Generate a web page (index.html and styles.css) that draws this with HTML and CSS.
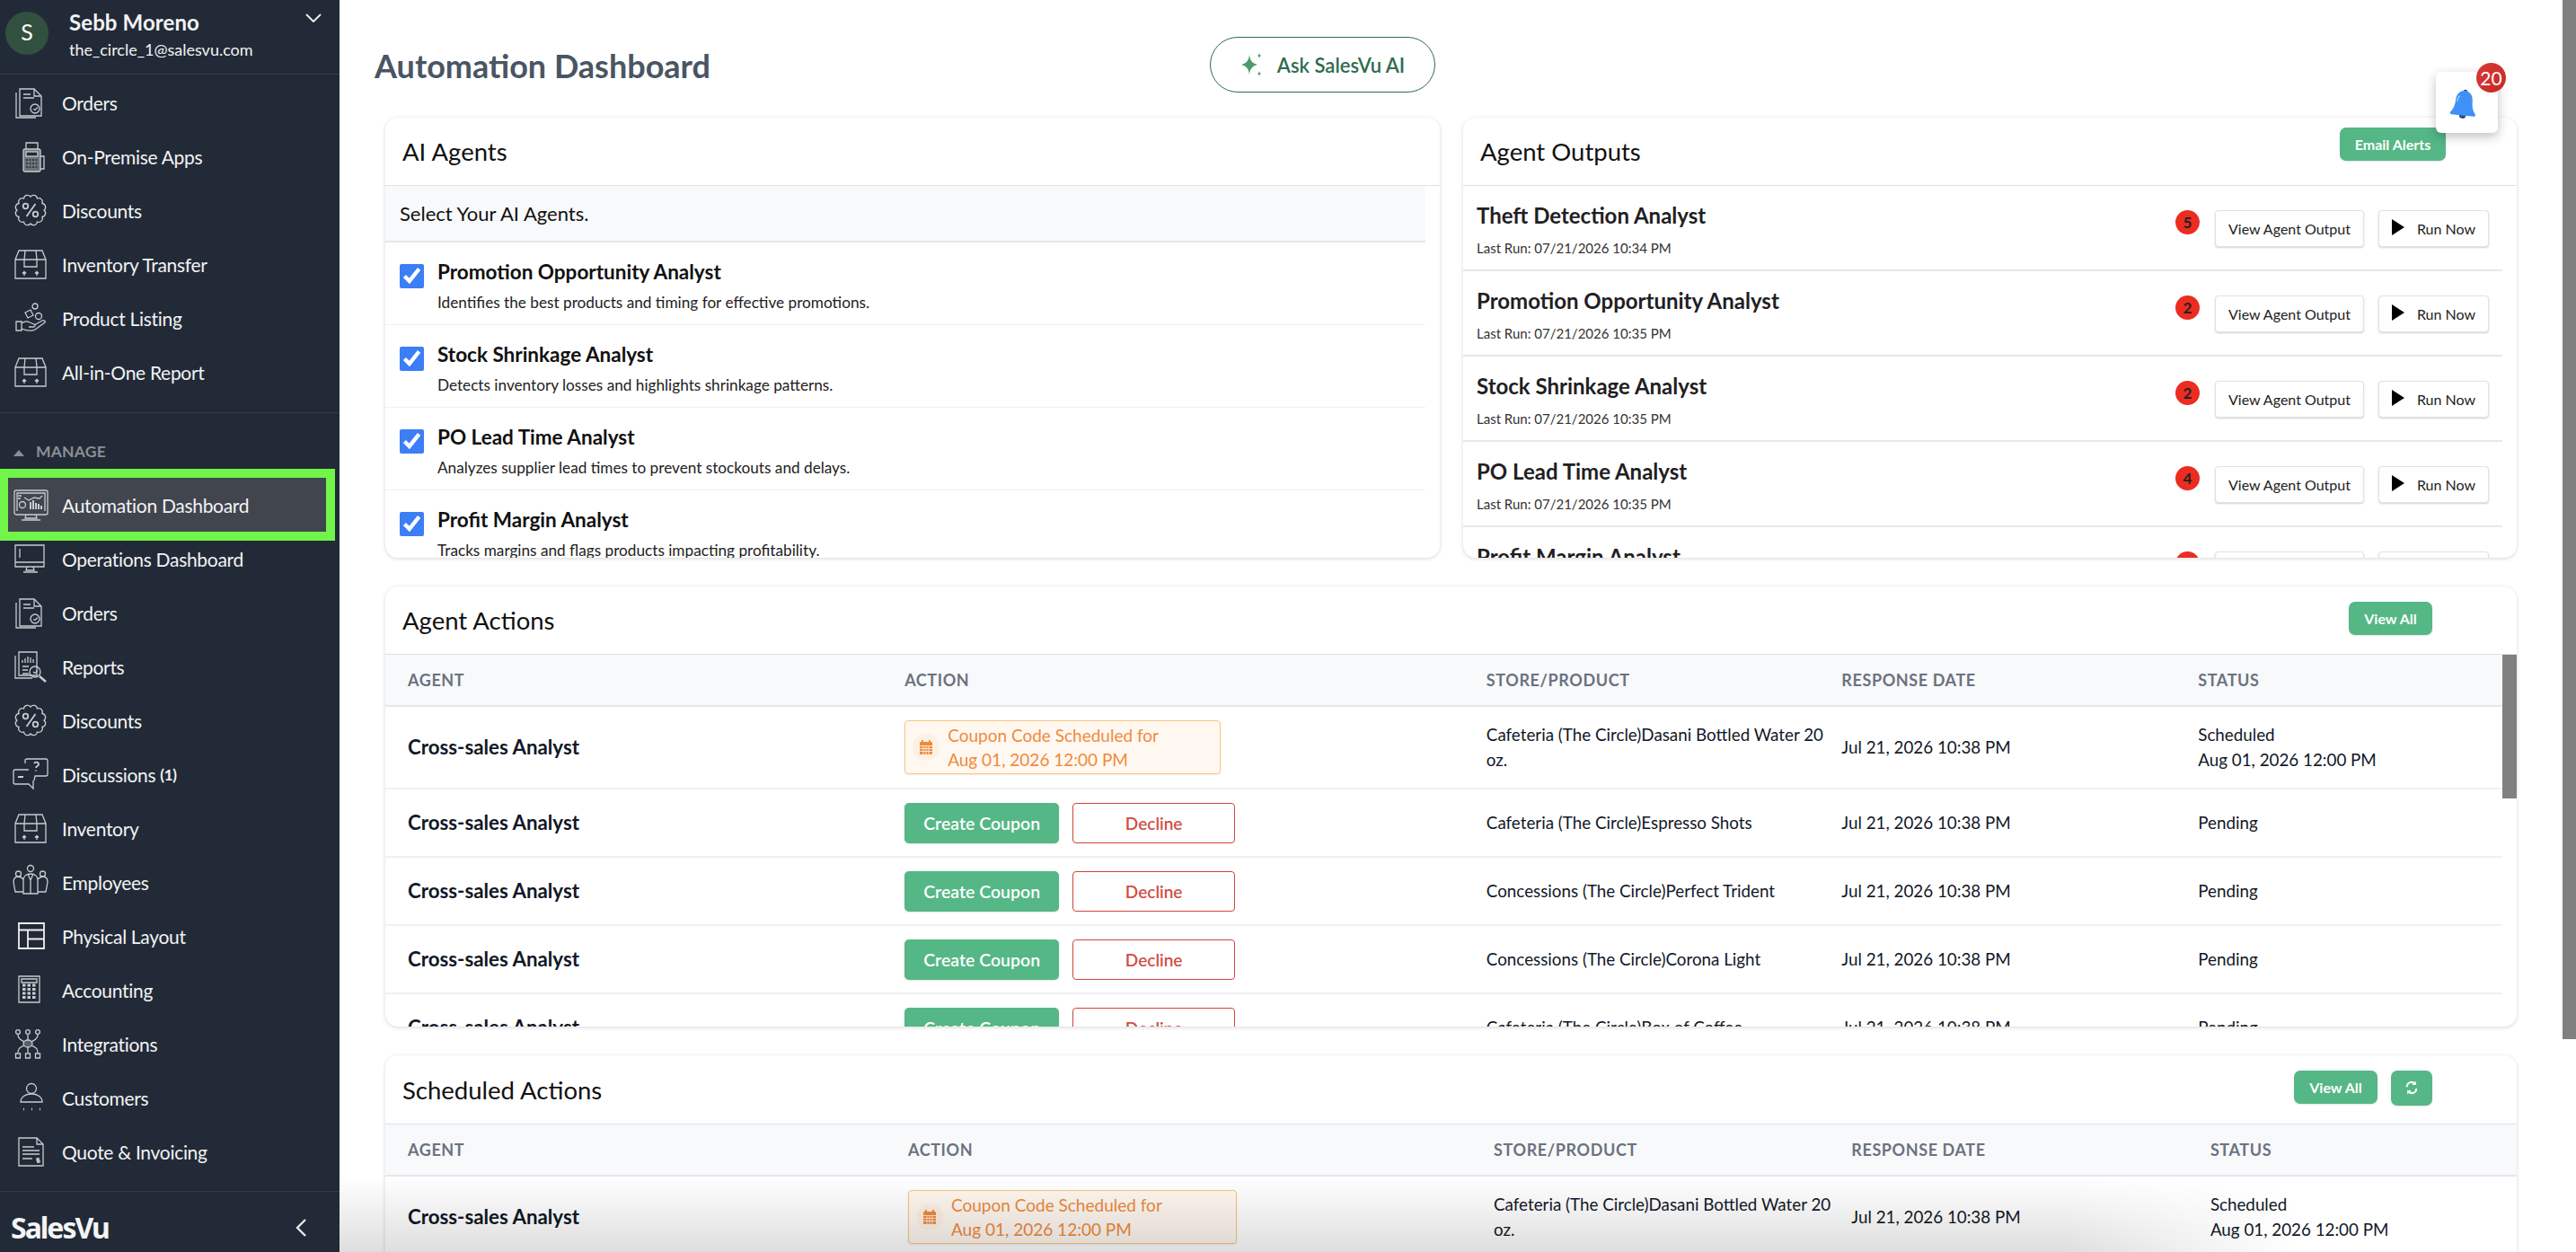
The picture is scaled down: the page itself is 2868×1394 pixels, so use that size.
FILE: index.html
```html
<!DOCTYPE html>
<html lang="en">
<head>
    <meta charset="UTF-8">
    <meta name="viewport" content="width=device-width, initial-scale=1.0">
    <title>Automation Dashboard</title>
    <link rel="stylesheet" href="styles.css">
</head>
<body>

<!-- icon sheet -->
<svg class="icon-sheet" xmlns="http://www.w3.org/2000/svg">
    <symbol id="i-orders" viewBox="0 0 40 40"><path d="M8 5h16l8 8v22H8z"/><path d="M24 5v8h8M4 9v28h22M12 11h8M12 15h12"/><circle cx="25" cy="27" r="5"/><path d="M23 27.5l2 1 3-3"/></symbol>
    <symbol id="i-pos" viewBox="0 0 40 40"><rect x="12" y="12" width="19" height="25" rx="2" fill="#6f747b"/><path d="M15 12V5h13v7M31 20h4v14h-4"/><rect x="15" y="15" width="13" height="5" fill="#222a37"/><path d="M15 24h13M15 28h13M15 32h13" stroke="#222a37" stroke-dasharray="2 1.5"/></symbol>
    <symbol id="i-discount" viewBox="0 0 40 40"><path d="M20 5A4.2 4.2 0 0 1 27.5 7 4.2 4.2 0 0 1 33 12.5 4.2 4.2 0 0 1 35 20 4.2 4.2 0 0 1 33 27.5 4.2 4.2 0 0 1 27.5 33 4.2 4.2 0 0 1 20 35 4.2 4.2 0 0 1 12.5 33 4.2 4.2 0 0 1 7 27.5 4.2 4.2 0 0 1 5 20 4.2 4.2 0 0 1 7 12.5 4.2 4.2 0 0 1 12.5 7 4.2 4.2 0 0 1 20 5z"/><g stroke-width="1.8"><path d="M25.5 13l-10 14"/><circle cx="14.5" cy="15.5" r="2.8"/><circle cx="25.5" cy="24.5" r="2.8"/></g></symbol>
    <symbol id="i-box" viewBox="0 0 40 40"><path d="M3 15h34v21H3zM3 15l4-10h26l4 10M14 5l-1 10M26 5l1 10"/><path d="M13 15v8h14v-8M13 33v-4M11 30.500l2-2 2 2M27 33v-4M25 30.500l2-2 2 2"/></symbol>
    <symbol id="i-product" viewBox="0 0 40 40"><circle cx="25" cy="7" r="3"/><circle cx="29" cy="18" r="3.500"/><path d="M14 14l6-3 3 6-6 3zM4 24h6v10H4zM10 26c3-2 6-3 9-1l5 2c2 1 1 3-1 3h-5M24 28l9-5c2-1 4 1 3 2l-11 8c-4 2-10 1-15-1"/></symbol>
    <symbol id="i-auto" viewBox="0 0 40 40"><rect x="2" y="4" width="37" height="27" rx="2"/><path d="M5 27V7h31v20M15 31l-1 4h13l-1-4M10 37h21M13 12l5 3 6-3 6 1 3-3M6 10h4M6 13h3"/><circle cx="11" cy="20" r="3.500"/><path d="M20 25v-8M23 25v-10M26 25v-7M29 25v-6M32 25v-4" stroke-width="2"/></symbol>
    <symbol id="i-monitor" viewBox="0 0 40 40"><path d="M3 5h32v24H3zM3 24h32M8 9v10M16 29l-1 4h9l-1-4M12 35h16"/></symbol>
    <symbol id="i-report" viewBox="0 0 40 40"><path d="M7 4h20v26H7zM3 8v25h19M11 16v-3M14 16v-5M17 16V9M20 16v-6M23 16v-4M11 20h7M11 24h6M11 28h7"/><circle cx="25" cy="26" r="6"/><path d="M23 26l2 1.500 3-3"/><path d="M30 31l7 6" stroke-width="2.600"/></symbol>
    <symbol id="i-chat" viewBox="0 0 40 40"><path d="M14 8V5a2 2 0 0 1 2-2h21a2 2 0 0 1 2 2v15a2 2 0 0 1-2 2H25l-1 5M18 15H3a2 2 0 0 0-2 2v12a2 2 0 0 0 2 2h15l5 5V27"/><path d="M24 8c1-2 5-2 5 1 0 2-3 2-3 4M26 15.500v1M6 23h6" stroke-width="1.800"/></symbol>
    <symbol id="i-people" viewBox="0 0 40 40"><circle cx="20" cy="5" r="3.500"/><circle cx="6.500" cy="11" r="3"/><circle cx="33.500" cy="11" r="3"/><path d="M12 33V18c0-4 3-7 8-7s8 3 8 7v15zM17 11l3 7 3-7M20 18v15M12 17c-2-2-3-3-5.500-3C3 14 1 16 1 20l2 11h9M28 17c2-2 3-3 5.500-3 3.500 0 5.500 2 5.500 6l-2 11h-9"/></symbol>
    <symbol id="i-layout" viewBox="0 0 40 40"><path d="M7 6h28v28H7zM7 13.500h28M17 13.500V34M17 23.500h18" stroke="#f0f0f0" stroke-width="1.800"/></symbol>
    <symbol id="i-calc" viewBox="0 0 40 40"><path d="M7 5h23v29H7zM10 8h17v4H10z"/><path d="M11 15h15M11 19.500h15M11 24h15M11 28.500h15" stroke-width="3" stroke-dasharray="3.500 2"/></symbol>
    <symbol id="i-integrations" viewBox="0 0 40 40"><circle cx="6" cy="7" r="2.400"/><circle cx="17" cy="7" r="2.400"/><circle cx="28" cy="7" r="2.400"/><ellipse cx="17" cy="20" rx="5" ry="4" fill="#5c6168"/><path d="M6 10c0 6 5 6 7 8M17 10v6M28 10c0 6-5 6-7 8M13 22c-3 2-7 2-7 8M17 24v6M21 22c3 2 7 2 7 8M3.500 31h5v5h-5zM14.500 31h5v5h-5zM25.500 31h5v5h-5z"/></symbol>
    <symbol id="i-customers" viewBox="0 0 40 40"><circle cx="21" cy="10" r="5.500"/><path d="M9 25c0-6 6-9 12-9s12 3 12 9zM9 25h24"/><path d="M12 33h1M21 33h1M30 33h1" stroke-width="2.500"/></symbol>
    <symbol id="i-quote" viewBox="0 0 40 40"><path d="M7 5h20l7 7v24H7zM27 5v7h7M11 15h13M11 19h19M11 23h19M11 28h11M28 27v6M30 28h-3v2h3v2h-3"/></symbol>
    <symbol id="i-calendar" viewBox="0 0 16 18"><path d="M2 3h12a1 1 0 0 1 1 1v12a1 1 0 0 1-1 1H2a1 1 0 0 1-1-1V4a1 1 0 0 1 1-1z" fill="#f08a3c"/><path d="M4 1v3M12 1v3" stroke="#f08a3c" stroke-width="2"/><path d="M1 7.500h14M1 10.500h14M1 13.500h14M5 7v10M8 7v10M11 7v10" stroke="#fff8f1" stroke-width=".8"/></symbol>
    <symbol id="i-play" viewBox="0 0 14 18"><path d="M0 0l14 9L0 18z"/></symbol>
</svg>

<div class="layout">

    <aside class="sidebar">
        <div class="user-box">
            <div class="avatar">S</div>
            <div class="user-text">
                <div class="user-name">Sebb Moreno</div>
                <div class="user-mail">the_circle_1@salesvu.com</div>
            </div>
            <svg class="user-chevron" viewBox="0 0 18 10"><path d="M1 1l8 8 8-8"/></svg>
        </div>

        <nav class="nav-group">
            <a class="nav-item"><svg class="nav-icon"><use href="#i-orders"/></svg>Orders</a>
            <a class="nav-item"><svg class="nav-icon"><use href="#i-pos"/></svg>On-Premise Apps</a>
            <a class="nav-item"><svg class="nav-icon"><use href="#i-discount"/></svg>Discounts</a>
            <a class="nav-item"><svg class="nav-icon"><use href="#i-box"/></svg>Inventory Transfer</a>
            <a class="nav-item"><svg class="nav-icon"><use href="#i-product"/></svg>Product Listing</a>
            <a class="nav-item"><svg class="nav-icon"><use href="#i-box"/></svg>All-in-One Report</a>
        </nav>

        <div class="nav-title">
            <svg class="nav-caret" viewBox="0 0 12 7"><path d="M6 0l6 7H0z"/></svg>
            MANAGE
        </div>

        <nav class="nav-group nav-manage">
            <a class="nav-item nav-active"><svg class="nav-icon"><use href="#i-auto"/></svg>Automation Dashboard</a>
            <a class="nav-item"><svg class="nav-icon"><use href="#i-monitor"/></svg>Operations Dashboard</a>
            <a class="nav-item"><svg class="nav-icon"><use href="#i-orders"/></svg>Orders</a>
            <a class="nav-item"><svg class="nav-icon"><use href="#i-report"/></svg>Reports</a>
            <a class="nav-item"><svg class="nav-icon"><use href="#i-discount"/></svg>Discounts</a>
            <a class="nav-item"><svg class="nav-icon"><use href="#i-chat"/></svg>Discussions <b class="nav-count">(1)</b></a>
            <a class="nav-item"><svg class="nav-icon"><use href="#i-box"/></svg>Inventory</a>
            <a class="nav-item"><svg class="nav-icon"><use href="#i-people"/></svg>Employees</a>
            <a class="nav-item"><svg class="nav-icon"><use href="#i-layout"/></svg>Physical Layout</a>
            <a class="nav-item"><svg class="nav-icon"><use href="#i-calc"/></svg>Accounting</a>
            <a class="nav-item"><svg class="nav-icon"><use href="#i-integrations"/></svg>Integrations</a>
            <a class="nav-item"><svg class="nav-icon"><use href="#i-customers"/></svg>Customers</a>
            <a class="nav-item"><svg class="nav-icon"><use href="#i-quote"/></svg>Quote &amp; Invoicing</a>
        </nav>

        <div class="side-foot">
            <span class="brand">SalesVu</span>
            <svg class="foot-chevron" viewBox="0 0 12 20"><path d="M11 1L2 10l9 9"/></svg>
        </div>
    </aside>

    <main class="main">
        <div class="page-head">
            <h1>Automation Dashboard</h1>
            <button class="ask-btn">
                <svg class="ask-icon" viewBox="0 0 24 30"><path d="M10 4c1 7 3 9 9 11-6 2-8 4-9 11-1-7-3-9-9-11 6-2 8-4 9-11zM21 2c.4 2 .8 2.500 2 3-1.200.5-1.600 1-2 3-.4-2-.8-2.500-2-3 1.200-.5 1.600-1 2-3zM21 22c.4 2 .8 2.500 2 3-1.200.5-1.600 1-2 3-.4-2-.8-2.500-2-3 1.200-.5 1.600-1 2-3z"/></svg>
                Ask SalesVu AI
            </button>
        </div>

        <div class="top-row">
            <section class="card card-top">
                <div class="card-head"><h2>AI Agents</h2></div>
                <div class="agents-list">
                    <div class="agents-hint">Select Your AI Agents.</div>
                    <label class="agent-row">
                        <input type="checkbox" checked>
                        <span><strong>Promotion Opportunity Analyst</strong><small>Identifies the best products and timing for effective promotions.</small></span>
                    </label>
                    <label class="agent-row">
                        <input type="checkbox" checked>
                        <span><strong>Stock Shrinkage Analyst</strong><small>Detects inventory losses and highlights shrinkage patterns.</small></span>
                    </label>
                    <label class="agent-row">
                        <input type="checkbox" checked>
                        <span><strong>PO Lead Time Analyst</strong><small>Analyzes supplier lead times to prevent stockouts and delays.</small></span>
                    </label>
                    <label class="agent-row">
                        <input type="checkbox" checked>
                        <span><strong>Profit Margin Analyst</strong><small>Tracks margins and flags products impacting profitability.</small></span>
                    </label>
                </div>
            </section>

            <section class="card card-top">
                <div class="card-head">
                    <h2>Agent Outputs</h2>
                    <button class="btn-green btn-alerts">Email Alerts</button>
                </div>
                <div class="outputs-list">
                    <div class="output-row">
                        <div class="output-info"><strong>Theft Detection Analyst</strong><small>Last Run: 07/21/2026 10:34 PM</small></div>
                        <span class="count-dot">5</span>
                        <button class="btn-plain btn-view">View Agent Output</button>
                        <button class="btn-plain btn-run"><svg class="play-icon"><use href="#i-play"/></svg>Run Now</button>
                    </div>
                    <div class="output-row">
                        <div class="output-info"><strong>Promotion Opportunity Analyst</strong><small>Last Run: 07/21/2026 10:35 PM</small></div>
                        <span class="count-dot">2</span>
                        <button class="btn-plain btn-view">View Agent Output</button>
                        <button class="btn-plain btn-run"><svg class="play-icon"><use href="#i-play"/></svg>Run Now</button>
                    </div>
                    <div class="output-row">
                        <div class="output-info"><strong>Stock Shrinkage Analyst</strong><small>Last Run: 07/21/2026 10:35 PM</small></div>
                        <span class="count-dot">2</span>
                        <button class="btn-plain btn-view">View Agent Output</button>
                        <button class="btn-plain btn-run"><svg class="play-icon"><use href="#i-play"/></svg>Run Now</button>
                    </div>
                    <div class="output-row">
                        <div class="output-info"><strong>PO Lead Time Analyst</strong><small>Last Run: 07/21/2026 10:35 PM</small></div>
                        <span class="count-dot">4</span>
                        <button class="btn-plain btn-view">View Agent Output</button>
                        <button class="btn-plain btn-run"><svg class="play-icon"><use href="#i-play"/></svg>Run Now</button>
                    </div>
                    <div class="output-row">
                        <div class="output-info"><strong>Profit Margin Analyst</strong><small>Last Run: 07/21/2026 10:35 PM</small></div>
                        <span class="count-dot">3</span>
                        <button class="btn-plain btn-view">View Agent Output</button>
                        <button class="btn-plain btn-run"><svg class="play-icon"><use href="#i-play"/></svg>Run Now</button>
                    </div>
                </div>
            </section>
        </div>

        <section class="card card-actions">
            <div class="card-head card-head-actions">
                <h2>Agent Actions</h2>
                <div class="head-btns"><button class="btn-green btn-small">View All</button></div>
            </div>
            <div class="table-wrap table-scroll">
                <table class="data-table">
                    <colgroup><col class="col-agent"><col class="col-action"><col class="col-store"><col class="col-date"><col class="col-status"></colgroup>
                    <thead><tr><th>AGENT</th><th>ACTION</th><th>STORE/PRODUCT</th><th>RESPONSE DATE</th><th>STATUS</th></tr></thead>
                    <tbody>
                        <tr class="row-tall">
                            <td class="td-agent">Cross-sales Analyst</td>
                            <td><div class="sched-tag sched-tag-a"><span class="sched-dot"><svg class="cal-icon"><use href="#i-calendar"/></svg></span><span>Coupon Code Scheduled for<br>Aug 01, 2026 12:00 PM</span></div></td>
                            <td>Cafeteria (The Circle)Dasani Bottled Water 20 oz.</td>
                            <td>Jul 21, 2026 10:38 PM</td>
                            <td>Scheduled<br>Aug 01, 2026 12:00 PM</td>
                        </tr>
                        <tr>
                            <td class="td-agent">Cross-sales Analyst</td>
                            <td><div class="act-btns"><button class="btn-green btn-coupon">Create Coupon</button><button class="btn-decline">Decline</button></div></td>
                            <td>Cafeteria (The Circle)Espresso Shots</td>
                            <td>Jul 21, 2026 10:38 PM</td>
                            <td>Pending</td>
                        </tr>
                        <tr>
                            <td class="td-agent">Cross-sales Analyst</td>
                            <td><div class="act-btns"><button class="btn-green btn-coupon">Create Coupon</button><button class="btn-decline">Decline</button></div></td>
                            <td>Concessions (The Circle)Perfect Trident</td>
                            <td>Jul 21, 2026 10:38 PM</td>
                            <td>Pending</td>
                        </tr>
                        <tr>
                            <td class="td-agent">Cross-sales Analyst</td>
                            <td><div class="act-btns"><button class="btn-green btn-coupon">Create Coupon</button><button class="btn-decline">Decline</button></div></td>
                            <td>Concessions (The Circle)Corona Light</td>
                            <td>Jul 21, 2026 10:38 PM</td>
                            <td>Pending</td>
                        </tr>
                        <tr>
                            <td class="td-agent">Cross-sales Analyst</td>
                            <td><div class="act-btns"><button class="btn-green btn-coupon">Create Coupon</button><button class="btn-decline">Decline</button></div></td>
                            <td>Cafeteria (The Circle)Box of Coffee</td>
                            <td>Jul 21, 2026 10:38 PM</td>
                            <td>Pending</td>
                        </tr>
                    </tbody>
                </table>
            </div>
            <div class="table-thumb"></div>
        </section>

        <section class="card card-sched">
            <div class="card-head card-head-actions card-head-sched">
                <h2>Scheduled Actions</h2>
                <div class="head-btns">
                    <button class="btn-green btn-small">View All</button>
                    <button class="btn-green btn-refresh">
                        <svg class="refresh-icon" viewBox="0 0 16 20"><path d="M2 9c0-4 3-6 6-6 2 0 3.500 1 4.500 2.500M14 11c0 4-3 6-6 6-2 0-3.500-1-4.500-2.500"/><path d="M13.500 1.500v5h-5zM2.500 18.500v-5h5z" class="refresh-tip"/></svg>
                    </button>
                </div>
            </div>
            <div class="table-wrap">
                <table class="data-table">
                    <colgroup><col class="col-agent"><col class="col-action"><col class="col-store"><col class="col-date"><col class="col-status"></colgroup>
                    <thead><tr><th>AGENT</th><th>ACTION</th><th>STORE/PRODUCT</th><th>RESPONSE DATE</th><th>STATUS</th></tr></thead>
                    <tbody>
                        <tr class="row-tall">
                            <td class="td-agent">Cross-sales Analyst</td>
                            <td><div class="sched-tag sched-tag-b"><span class="sched-dot"><svg class="cal-icon"><use href="#i-calendar"/></svg></span><span>Coupon Code Scheduled for<br>Aug 01, 2026 12:00 PM</span></div></td>
                            <td>Cafeteria (The Circle)Dasani Bottled Water 20 oz.</td>
                            <td>Jul 21, 2026 10:38 PM</td>
                            <td>Scheduled<br>Aug 01, 2026 12:00 PM</td>
                        </tr>
                    </tbody>
                </table>
            </div>
        </section>

        <!-- floating stuff -->
        <div class="bell-box">
            <svg class="bell-icon" viewBox="0 0 32 36"><path class="bell-clap" d="M14 3a2.500 2.500 0 0 1 5 0zM12 31h8a4 4 0 0 1-8 0z"/><path d="M16 2c6 0 10 5 10 12 0 6 1.500 11 5 15 .5 1.500-.5 2.500-2 2.500H3c-1.500 0-2.500-1-2-2.500 3.500-4 5-9 5-15C6 7 10 2 16 2z"/><path class="bell-shine" d="M10 9c-1.500 2-2 4-2 6"/></svg>
            <span class="bell-count">20</span>
        </div>
        <div class="bottom-fade"></div>
    </main>

    <div class="page-thumb"></div>
</div>

</body>
</html>
```

FILE: styles.css
```css
* {
    box-sizing: border-box;
}

html, body {
    margin: 0;
    height: 100%;
}

body {
    font-family: "Lato", "Open Sans", sans-serif;
    color: #111827;
    background-color: #ffffff;
    overflow: hidden;
}

button {
    font-family: inherit;
    cursor: pointer;
}

.icon-sheet {
    display: none;
}

.layout {
    display: flex;
    height: 1394px;
    position: relative;
}

/* sidebar */
.sidebar {
    width: 378px;
    flex-shrink: 0;
    height: 100%;
    background-color: #222a37;
    color: #f2f3f4;
    display: flex;
    flex-direction: column;
}

.user-box {
    height: 83px;
    padding: 13px 20px 0 6px;
    display: flex;
    align-items: flex-start;
    border-bottom: 1px solid #323c48;
}

.avatar {
    width: 48px;
    height: 48px;
    border-radius: 50%;
    background-color: #32503f;
    color: #ffffff;
    font-size: 25px;
    display: flex;
    align-items: center;
    justify-content: center;
    padding-bottom: 4px;
    margin-right: 23px;
}

.user-text {
    flex: 1;
    margin-top: -4px;
}

.user-name {
    font-size: 24px;
    font-weight: 700;
    line-height: 32px;
    letter-spacing: 0.1px;
}

.user-mail {
    font-size: 18px;
    line-height: 28px;
}

.user-chevron {
    width: 18px;
    height: 10px;
    margin-top: 2px;
    fill: none;
    stroke: #f2f3f4;
    stroke-width: 1.8;
}

.nav-group {
    padding-top: 1px;
    height: 377px;
    border-bottom: 1px solid #323c48;
}

.nav-manage {
    padding-top: 0;
    height: 796px;
    flex-shrink: 0;
}

.nav-item {
    height: 60px;
    display: flex;
    align-items: center;
    padding-left: 14px;
    font-size: 21px;
    letter-spacing: -0.3px;
    white-space: pre;
    color: #f2f3f4;
}

.nav-icon {
    width: 40px;
    height: 40px;
    margin-right: 15px;
    flex-shrink: 0;
    fill: none;
    stroke: #c9cccf;
    stroke-width: 1.3;
}

.nav-count {
    font-size: 17px;
}

.nav-active {
    margin: 1px 15px 0 9px;
    padding-left: 5px;
    background-color: #41454e;
    outline: 10px solid #70f548;
}

.nav-title {
    height: 71px;
    padding: 32px 0 0 15px;
    font-size: 17.5px;
    font-weight: 700;
    color: #8c8f94;
    display: flex;
    align-items: flex-start;
    letter-spacing: 0.2px;
    flex-shrink: 0;
}

.nav-caret {
    width: 12px;
    height: 7px;
    margin: 9px 13px 0 0;
    fill: #8c8f94;
}

.side-foot {
    flex: 1;
    display: flex;
    align-items: center;
    justify-content: space-between;
    padding: 12px 37px 0 12px;
}

.brand {
    font-family: "Noto Sans", sans-serif;
    font-size: 32px;
    font-weight: 700;
    letter-spacing: -2px;
    color: #f4f5f5;
}

.foot-chevron {
    width: 12px;
    height: 20px;
    fill: none;
    stroke: #e8e9ea;
    stroke-width: 2.4;
}

/* main column */
.main {
    flex: 1;
    min-width: 0;
    height: 100%;
    padding: 0 66px 0 51px;
    position: relative;
    overflow: hidden;
}

.page-head {
    height: 131px;
    margin-left: -12px;
    padding-top: 41px;
    display: grid;
    grid-template-columns: 930px 251px;
    align-items: start;
}

.page-head h1 {
    margin: 0;
    padding-top: 7px;
    font-size: 36px;
    line-height: 50px;
    font-weight: 700;
    color: #4a5563;
}

.ask-btn {
    height: 62px;
    border: 1px solid #2f6b4f;
    border-radius: 31px;
    background: #ffffff;
    color: #2f6b4f;
    font-size: 22px;
    font-weight: 600;
    display: flex;
    align-items: center;
    justify-content: center;
    gap: 17px;
}

.ask-icon {
    width: 24px;
    height: 30px;
    fill: #4c9a6a;
}

.top-row {
    display: grid;
    grid-template-columns: 1174px 1173px;
    column-gap: 26px;
}

.card {
    background: #ffffff;
    border-radius: 14px;
    overflow: hidden;
    position: relative;
    box-shadow: 0 1px 4px rgba(0, 0, 0, 0.16);
}

.card-top {
    height: 490px;
}

.card-head {
    height: 76px;
    padding: 0 79px 0 19px;
    display: flex;
    align-items: center;
    justify-content: space-between;
    border-bottom: 1px solid #dfe1e5;
}

.card-head h2 {
    margin: 0;
    font-size: 27.5px;
    font-weight: 400;
    color: #111111;
}

.btn-green {
    border: 0;
    border-radius: 7px;
    background-color: #55b786;
    color: #ffffff;
    font-weight: 700;
    box-shadow: 0 1px 2px rgba(0, 0, 0, 0.1);
}

.btn-alerts {
    width: 118px;
    height: 37px;
    font-size: 16px;
    margin-top: -17px;
}

/* ai agents */
.agents-list {
    padding-right: 16px;
}

.agents-hint {
    height: 63px;
    padding: 0 16px;
    display: flex;
    align-items: center;
    background-color: #f8f9fb;
    border-bottom: 2px solid #e5e7eb;
    font-size: 22px;
    color: #111111;
}

.agent-row {
    height: 92px;
    padding: 24px 16px 0;
    display: flex;
    align-items: flex-start;
    gap: 15px;
    border-bottom: 1px solid #eef0f2;
}

.agent-row input {
    width: 27px;
    height: 27px;
    margin: 0;
    accent-color: #3b7ef6;
}

.agent-row strong {
    display: block;
    font-size: 22.5px;
    line-height: 20px;
    font-weight: 700;
    color: #111111;
    margin-top: -1px;
}

.agent-row small {
    display: block;
    font-size: 17.2px;
    line-height: 22px;
    margin-top: 13px;
    color: #222222;
}

/* agent outputs */
.outputs-list {
    padding-right: 16px;
}

.output-row {
    height: 95px;
    padding: 0 15px;
    display: flex;
    align-items: center;
    border-bottom: 2px solid #e5e7eb;
}

.output-info {
    flex: 1;
    padding-top: 4px;
}

.output-info strong {
    display: block;
    font-size: 24px;
    line-height: 28px;
    font-weight: 700;
    color: #1f2023;
}

.output-info small {
    display: block;
    font-size: 15px;
    line-height: 20px;
    margin-top: 12px;
    color: #333333;
}

.count-dot {
    width: 27px;
    height: 27px;
    border-radius: 50%;
    background-color: #ec2c20;
    color: #222222;
    font-size: 17px;
    font-weight: 700;
    display: flex;
    align-items: center;
    justify-content: center;
    margin: -12px 17px 0 0;
}

.btn-plain {
    height: 41px;
    margin-top: 2px;
    border: 1px solid #e0e2e6;
    border-radius: 4px;
    background: #ffffff;
    color: #222222;
    font-size: 16px;
    box-shadow: 0 1px 2px rgba(0, 0, 0, 0.18);
    display: flex;
    align-items: center;
    justify-content: center;
    padding: 0;
}

.btn-view {
    width: 166px;
    margin-right: 16px;
}

.btn-run {
    width: 123px;
    gap: 14px;
}

.play-icon {
    width: 14px;
    height: 18px;
    fill: #000000;
    margin-top: -3px;
}

/* tables */
.card-actions {
    margin-top: 32px;
    height: 490px;
}

.card-sched {
    margin-top: 32px;
    height: 400px;
}

.card-head-actions {
    justify-content: space-between;
    padding: 0 94px 0 19px;
    height: 76px;
}

.card-head-sched {
    height: 77px;
}

.head-btns {
    display: flex;
    gap: 15px;
    margin-top: -4px;
}

.btn-small {
    width: 93px;
    height: 37px;
    font-size: 16px;
}

.btn-refresh {
    width: 46px;
    height: 39px;
    padding: 0;
    display: flex;
    align-items: center;
    justify-content: center;
}

.refresh-icon {
    width: 14px;
    height: 18px;
    fill: none;
    stroke: #ffffff;
    stroke-width: 2.4;
}

.refresh-tip {
    fill: #ffffff;
    stroke: none;
}

.table-scroll {
    margin-right: 16px;
}

.data-table {
    width: 100%;
    border-collapse: collapse;
    table-layout: fixed;
}

.col-agent { width: 24.02%; }
.col-action { width: 27.48%; }
.col-store { width: 16.78%; }
.col-date { width: 16.84%; }
.col-status { width: 14.88%; }

.data-table th {
    height: 57px;
    padding: 0 12px;
    text-align: left;
    font-size: 18px;
    font-weight: 700;
    letter-spacing: 0.6px;
    color: #6b7280;
    background-color: #f8f9fb;
    border-bottom: 2px solid #e5e7eb;
}

.data-table th:first-child,
.data-table td:first-child {
    padding-left: 25px;
}

.data-table td {
    height: 76px;
    padding: 0 2px 0 12px;
    font-size: 18.8px;
    line-height: 28px;
    color: #111827;
    border-bottom: 2px solid #f0f1f4;
}

.data-table .row-tall td {
    height: 92px;
}

.data-table .td-agent {
    font-size: 22.3px;
    font-weight: 700;
}

.sched-tag {
    height: 60px;
    border: 1px solid #fbc67f;
    border-radius: 4px;
    background-color: #fff8f1;
    color: #f08a3c;
    font-size: 19px;
    line-height: 27px;
    display: flex;
    align-items: center;
    padding-left: 8px;
    gap: 9px;
    box-shadow: 0 1px 2px rgba(0, 0, 0, 0.08);
}

.sched-tag-a {
    width: 352px;
}

.sched-tag-b {
    width: 366px;
}

.sched-dot {
    width: 30px;
    height: 30px;
    border-radius: 50%;
    background-color: #fdf1e4;
    display: flex;
    align-items: center;
    justify-content: center;
}

.cal-icon {
    width: 16px;
    height: 18px;
}

.act-btns {
    display: flex;
    gap: 15px;
}

.btn-coupon {
    width: 172px;
    height: 45px;
    font-size: 19.5px;
    font-weight: 600;
    border-radius: 5px;
}

.btn-decline {
    width: 181px;
    height: 45px;
    border: 1px solid #d0453a;
    border-radius: 4px;
    background: #ffffff;
    color: #cf4f45;
    font-size: 19px;
    font-weight: 600;
}

/* overlays */
.table-thumb {
    position: absolute;
    top: 76px;
    right: 0;
    width: 16px;
    height: 160px;
    background-color: #808080;
}

.page-thumb {
    position: absolute;
    top: 0;
    right: 0;
    width: 15px;
    height: 1157px;
    background-color: #808080;
}

.bell-box {
    position: absolute;
    left: 2334px;
    top: 80px;
    width: 69px;
    height: 68px;
    border-radius: 6px;
    background: #ffffff;
    box-shadow: 0 4px 12px rgba(0, 0, 0, 0.25);
    display: flex;
    align-items: center;
    justify-content: center;
}

.bell-icon {
    width: 30px;
    height: 34px;
    fill: #3f90f7;
    margin: 4px 8px 0 0;
    transform: rotate(6deg);
}

.bell-clap {
    fill: #2b4a78;
}

.bell-shine {
    fill: none;
    stroke: #a9cffb;
    stroke-width: 1.5;
    stroke-linecap: round;
}

.bell-count {
    position: absolute;
    top: -10px;
    right: -9px;
    width: 33px;
    height: 33px;
    border-radius: 50%;
    background: linear-gradient(135deg, #d93a36, #c62828);
    color: #ffffff;
    font-size: 21px;
    display: flex;
    align-items: center;
    justify-content: center;
}

.bottom-fade {
    position: absolute;
    left: 0;
    right: 308px;
    bottom: 0;
    height: 84px;
    background: linear-gradient(to bottom, rgba(0, 0, 0, 0), rgba(0, 0, 0, 0.13));
    -webkit-mask-image: linear-gradient(to right, #000 88%, transparent);
    mask-image: linear-gradient(to right, #000 88%, transparent);
    pointer-events: none;
}
```
